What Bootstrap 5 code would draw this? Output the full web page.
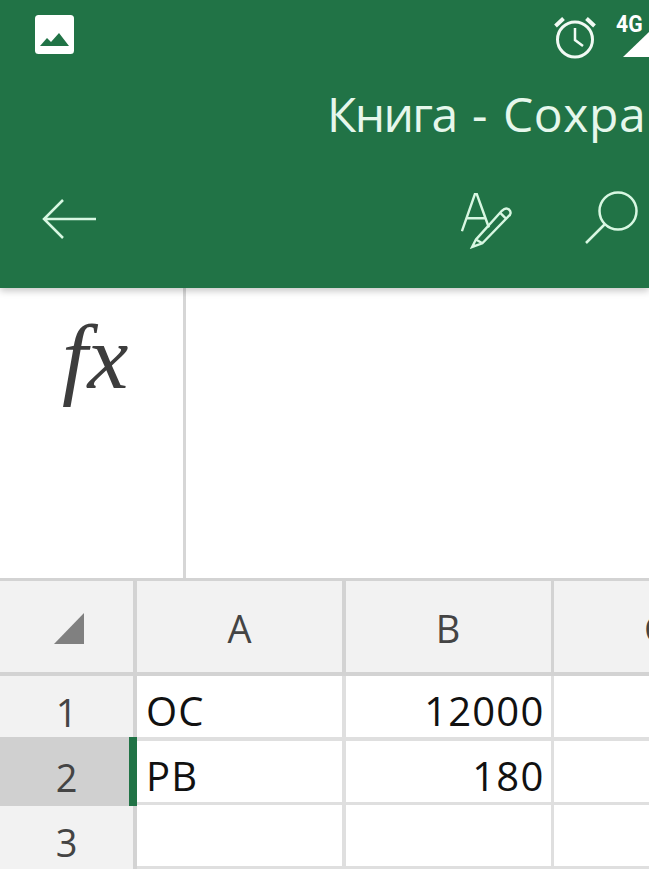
<!DOCTYPE html>
<html lang="en">
<head>
  <meta charset="UTF-8" />
  <meta name="viewport" content="width=device-width, initial-scale=1.0"/>
  <title>Книга</title>
  <link href="https://cdn.jsdelivr.net/npm/bootstrap@5.3.6/dist/css/bootstrap.min.css" rel="stylesheet" />
  <style>
    html, body {
      height: 870px;
      overflow: hidden;
    }

    body {
      background-color: #fff;
      font-family: "Open Sans", "Noto Sans", sans-serif;
    }

    .app-head {
      height: 288px;
      background-color: #217346;
      box-shadow: 0 3px 7px rgba(0,0,0,0.22);
      color: #e6f7ec;
      position: relative;
      z-index: 2;
    }

    .status-row { height: 84px; padding: 15px 0 0 35px; }
    .net-cell { width: 33px; height: 43px; margin-left: 20px; }
    .net-label {
      position: absolute;
      left: 0;
      top: 0;
      font: 700 23px/19px Roboto, sans-serif;
      color: #fff;
      transform: scaleX(.92);
      transform-origin: left top;
    }
    .net-cell svg { position: absolute; left: 7px; top: 0; }

    .title-row {
      height: 66px;
      padding-left: 327px;
      font-size: 48px;
      font-weight: 400;
      line-height: 60px;
      white-space: nowrap;
      word-spacing: 3px;
      overflow: hidden;
    }
    .title-name { letter-spacing: -1.6px; }
    .title-state { letter-spacing: .6px; }

    .tool-row { height: 138px; padding: 0 9px 0 41px; }
    .search-icon { margin-left: 71px; }

    .formula-row { height: 290px; }
    .fx-cell {
      width: 186px;
      border-right: 3px solid #d6d6d6;
      font: italic 92px/1 "Liberation Serif", serif;
      color: #3d3d3d;
      padding: 23px 0 0 62px;
    }

    .sheet-head { font-size: 38px; }
    .sheet-body { font-size: 38px; }
    .sheet-head {
      height: 98px;
      background-color: #d3d3d3;
      padding: 3px 0 4px;
    }
    .corner-cell {
      width: 137px;
      background-color: #f2f2f2;
      border-right: 4px solid #d3d3d3;
    }
    .col-heads {
      display: grid;
      grid-template-columns: 205px 205px 1fr;
      column-gap: 3.5px;
      background-color: #d3d3d3;
    }
    .col-label {
      background-color: #f2f2f2;
      color: #444;
      line-height: 91px;
      padding-top: 2px;
      text-align: center;
      white-space: nowrap;
      overflow: hidden;
    }
    .col-label.cut-off { padding-left: 90px; text-align: left; }

    .row-heads {
      width: 137px;
      background-color: #f2f2f2;
      border-right: 4px solid #d3d3d3;
      color: #444;
      text-align: center;
    }
    .row-label { height: 61px; line-height: 72px; }
    .row-label.now-on {
      height: 69px;
      line-height: 80px;
      background-color: #d0d0d0;
      position: relative;
    }
    .row-label.now-on::after {
      content: "";
      position: absolute;
      top: 0;
      right: -4px;
      bottom: 0;
      width: 8px;
      background-color: #217346;
    }

    .cell-grid {
      display: grid;
      grid-template-columns: 205px 205px 1fr;
      grid-auto-rows: 61px;
      gap: 3.5px;
      background-color: #dfdfdf;
      padding-bottom: 3px;
    }
    .data-cell {
      background-color: #fff;
      color: #111;
      font-size: 40px;
      line-height: 70px;
      padding: 0 6px 0 9px;
      letter-spacing: 1.2px;
    }
  </style>
</head>
<body>

<!-- Green top part -->
<div class="app-head">
  <div class="status-row d-flex align-items-start justify-content-between">
    <svg width="39" height="39" viewBox="0 0 39 39">
      <rect width="39" height="39" rx="3.5" fill="#fff"/>
      <path d="M5 31 L12 23 L16 27 L24 18 L34 31 Z" fill="#217346"/>
    </svg>
    <div class="d-flex">
      <svg width="42" height="44" viewBox="0 0 42 44" fill="none" stroke="#f1faf4" stroke-width="3">
        <circle cx="21" cy="24.5" r="17.5"/>
        <path d="M21 13 V25 L29 31" stroke-width="2.5"/>
        <path d="M1.5 11 L9.5 3.5 M40.5 11 L32.5 3.5" stroke-width="4"/>
      </svg>
      <div class="net-cell position-relative">
        <svg width="26" height="43" viewBox="0 0 26 43"><path d="M0 42 L26 17 V42 Z" fill="#fff"/></svg>
        <span class="net-label">4G</span>
      </div>
    </div>
  </div>
  <div class="title-row"><span class="title-name">Книга</span> - <span class="title-state">Сохранено</span></div>
  <div class="tool-row d-flex align-items-center justify-content-between">
    <svg width="58" height="44" viewBox="0 0 58 44" fill="none" stroke="#d8f7e2" stroke-width="2.5">
      <path d="M55 22 H4 M22 3 L3 22 L22 41"/>
    </svg>
    <div class="d-flex align-items-center">
      <svg class="mt-1" width="52" height="56" viewBox="0 0 56 60" fill="none" stroke="#d8f7e2" stroke-width="2.6">
        <path d="M1 41 L15 1 L17 1 L30 37 M6 27 H26"/>
        <path d="M16 50 L44 19 C47 16 50 16 52 18 C54 20 54 23 51 25 L23 54 L12 58 Z M42 21 L49 28 M16 50 L23 54"/>
      </svg>
      <svg class="search-icon" width="56" height="56" viewBox="0 0 56 56" fill="none" stroke="#d8f7e2" stroke-width="2.5">
        <circle cx="34" cy="20" r="18.5"/>
        <path d="M21 33 L2 52"/>
      </svg>
    </div>
  </div>
</div>

<!-- Formula bar -->
<div class="formula-row d-flex">
  <div class="fx-cell">fx</div>
</div>

<!-- Sheet -->
<div class="sheet-head d-flex">
  <div class="corner-cell flex-shrink-0 d-flex align-items-center justify-content-center">
    <svg class="ms-1 mt-1" width="30" height="31" viewBox="0 0 30 31"><path d="M0 31 L30 0 V31 Z" fill="#808080"/></svg>
  </div>
  <div class="col-heads flex-grow-1">
    <div class="col-label">A</div>
    <div class="col-label">B</div>
    <div class="col-label cut-off">C</div>
  </div>
</div>
<div class="sheet-body d-flex">
  <div class="row-heads flex-shrink-0">
    <div class="row-label">1</div>
    <div class="row-label now-on">2</div>
    <div class="row-label">3</div>
  </div>
  <div class="cell-grid flex-grow-1">
    <div class="data-cell">OC</div>
    <div class="data-cell text-end">12000</div>
    <div class="data-cell"></div>
    <div class="data-cell">PB</div>
    <div class="data-cell text-end">180</div>
    <div class="data-cell"></div>
    <div class="data-cell"></div>
    <div class="data-cell"></div>
    <div class="data-cell"></div>
  </div>
</div>

<script src="https://cdn.jsdelivr.net/npm/bootstrap@5.3.6/dist/js/bootstrap.bundle.min.js"></script>
</body>
</html>
